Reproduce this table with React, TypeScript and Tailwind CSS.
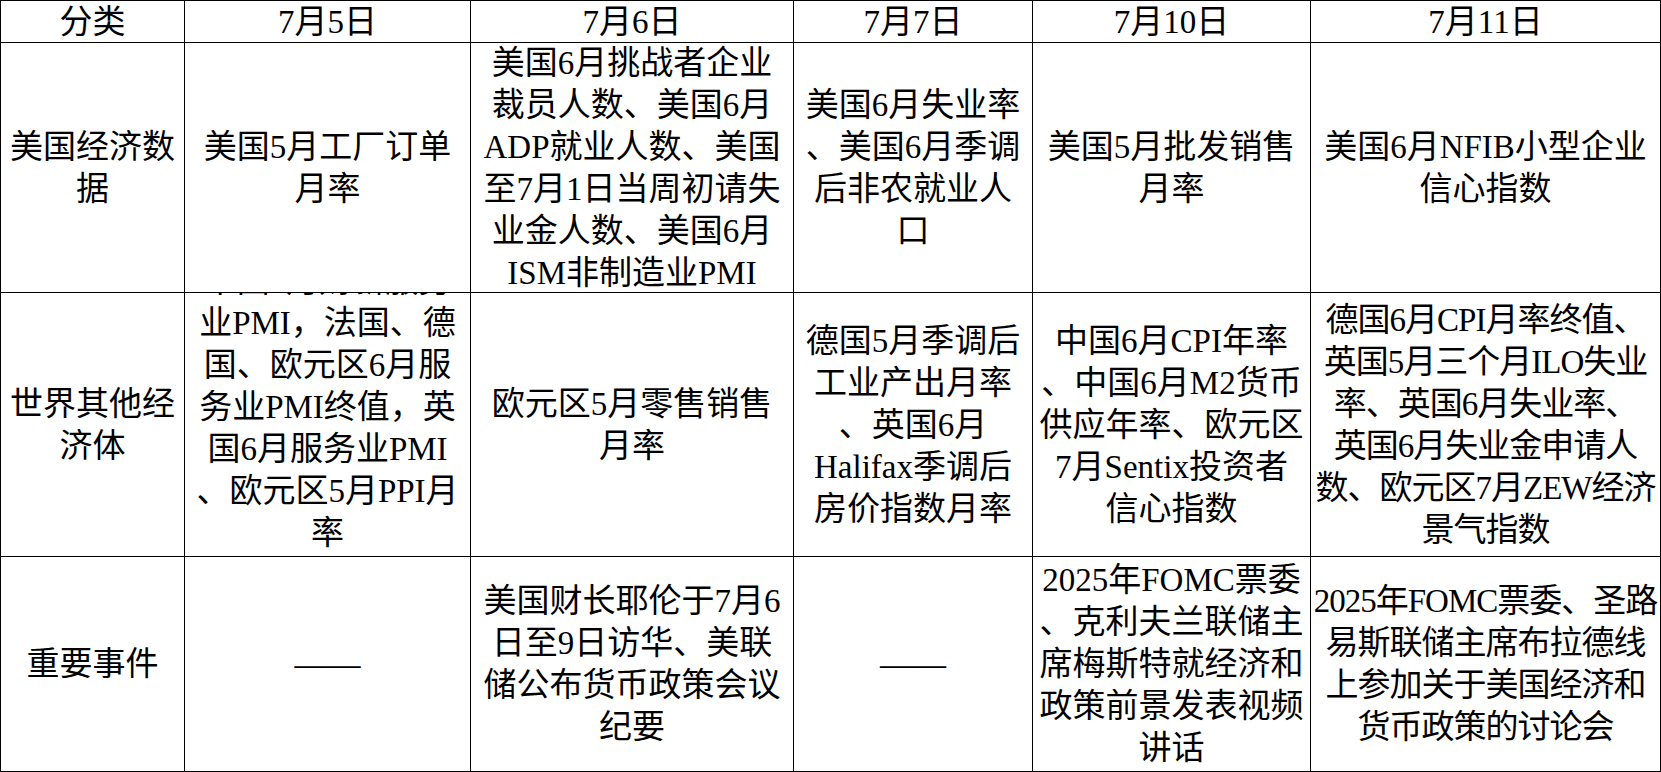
import React from "react";

type CellProps = { lines: string[]; align?: "center" | "end"; tight?: boolean };

function Cell({ lines, align = "center", tight = false }: CellProps) {
  return (
    <div
      className={
        "border-r border-b border-black overflow-hidden flex flex-col items-center text-center " +
        (align === "end" ? "justify-end pb-[2px]" : "justify-center") +
        (tight ? " tracking-[-1px]" : "")
      }
    >
      {lines.map((l, i) => (
        <div key={i} className="whitespace-nowrap leading-[42px] shrink-0">
          {l}
        </div>
      ))}
    </div>
  );
}

export default function App() {
  return (
    <div
      className="w-[1661px] h-[772px] bg-white text-black text-[33px]"
      style={{ fontFamily: '"Liberation Serif", "Noto Sans CJK SC", serif' }}
    >
      <div className="grid grid-cols-[184px_286px_323px_239px_278px_350px] grid-rows-[42px_250px_264px_215px] border-l border-t border-black">
        <Cell lines={["分类"]} />
        <Cell lines={["7月5日"]} />
        <Cell lines={["7月6日"]} />
        <Cell lines={["7月7日"]} />
        <Cell lines={["7月10日"]} />
        <Cell lines={["7月11日"]} />

        <Cell lines={["美国经济数", "据"]} />
        <Cell lines={["美国5月工厂订单", "月率"]} />
        <Cell
          lines={[
            "美国6月挑战者企业",
            "裁员人数、美国6月",
            "ADP就业人数、美国",
            "至7月1日当周初请失",
            "业金人数、美国6月",
            "ISM非制造业PMI",
          ]}
        />
        <Cell lines={["美国6月失业率", "、美国6月季调", "后非农就业人", "口"]} />
        <Cell lines={["美国5月批发销售", "月率"]} />
        <Cell lines={["美国6月NFIB小型企业", "信心指数"]} />

        <Cell lines={["世界其他经", "济体"]} />
        <Cell
          align="end"
          lines={[
            "中国6月财新服务",
            "业PMI，法国、德",
            "国、欧元区6月服",
            "务业PMI终值，英",
            "国6月服务业PMI",
            "、欧元区5月PPI月",
            "率",
          ]}
        />
        <Cell lines={["欧元区5月零售销售", "月率"]} />
        <Cell
          lines={["德国5月季调后", "工业产出月率", "、英国6月", "Halifax季调后", "房价指数月率"]}
        />
        <Cell
          lines={["中国6月CPI年率", "、中国6月M2货币", "供应年率、欧元区", "7月Sentix投资者", "信心指数"]}
        />
        <Cell
          tight
          lines={[
            "德国6月CPI月率终值、",
            "英国5月三个月ILO失业",
            "率、英国6月失业率、",
            "英国6月失业金申请人",
            "数、欧元区7月ZEW经济",
            "景气指数",
          ]}
        />

        <Cell lines={["重要事件"]} />
        <Cell lines={["——"]} />
        <Cell lines={["美国财长耶伦于7月6", "日至9日访华、美联", "储公布货币政策会议", "纪要"]} />
        <Cell lines={["——"]} />
        <Cell
          lines={["2025年FOMC票委", "、克利夫兰联储主", "席梅斯特就经济和", "政策前景发表视频", "讲话"]}
        />
        <Cell
          tight
          lines={["2025年FOMC票委、圣路", "易斯联储主席布拉德线", "上参加关于美国经济和", "货币政策的讨论会"]}
        />
      </div>
    </div>
  );
}
